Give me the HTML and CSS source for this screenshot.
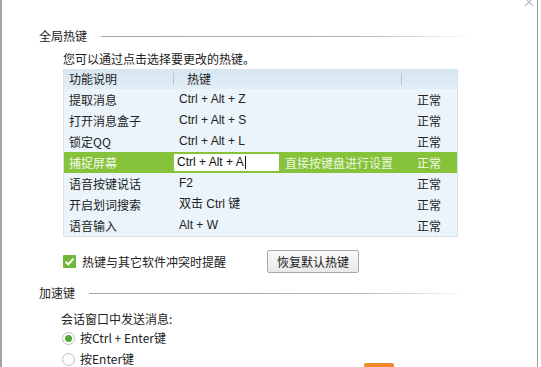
FILE: index.html
```html
<!DOCTYPE html>
<html lang="zh">
<head>
<meta charset="utf-8">
<link rel="stylesheet" href="styles.css">
</head>
<body>
<div class="frame">
  <svg class="close" width="10" height="8" viewBox="0 0 10 8"><path d="M1 -2 L9 6 M9 -2 L1 6" stroke="#bdbdbd" stroke-width="1.2" fill="none"/></svg>
  <div class="section-title"><span>全局热键</span><i class="rule"></i></div>
  <div class="hint">您可以通过点击选择要更改的热键。</div>
  <div class="table">
    <div class="row head">
      <div class="c1">功能说明</div>
      <div class="c2">热键</div>
      <div class="c3"></div>
    </div>
    <div class="row"><div class="c1">提取消息</div><div class="c2">Ctrl + Alt + Z</div><div class="c3">正常</div></div>
    <div class="row"><div class="c1">打开消息盒子</div><div class="c2">Ctrl + Alt + S</div><div class="c3">正常</div></div>
    <div class="row"><div class="c1">锁定QQ</div><div class="c2">Ctrl + Alt + L</div><div class="c3">正常</div></div>
    <div class="row sel">
      <div class="c1">捕捉屏幕</div>
      <div class="c2"><span class="input">Ctrl + Alt + A<i class="caret"></i></span><span class="tip">直接按键盘进行设置</span></div>
      <div class="c3">正常</div>
    </div>
    <div class="row"><div class="c1">语音按键说话</div><div class="c2">F2</div><div class="c3">正常</div></div>
    <div class="row"><div class="c1">开启划词搜索</div><div class="c2">双击 Ctrl 键</div><div class="c3">正常</div></div>
    <div class="row"><div class="c1">语音输入</div><div class="c2">Alt + W</div><div class="c3">正常</div></div>
  </div>
  <div class="opts">
    <label class="check"><span class="box"><svg width="13" height="13" viewBox="0 0 13 13"><rect x="0" y="0" width="13" height="13" rx="1" fill="#6fb83a"/><path d="M2.6 6.8 L5.3 9.3 L10.4 3.6" fill="none" stroke="#fff" stroke-width="2"/></svg></span>热键与其它软件冲突时提醒</label>
    <button class="btn">恢复默认热键</button>
  </div>
  <div class="section-title s2"><span>加速键</span><i class="rule"></i></div>
  <div class="hint2">会话窗口中发送消息:</div>
  <div class="radio on r1"><span class="dot"></span>按Ctrl + Enter键</div>
  <div class="radio"><span class="dot"></span>按Enter键</div>
  <div class="logo"></div>
</div>
</body>
</html>
```

FILE: styles.css
```css
html, body {
  margin: 0;
  padding: 0;
  background: #fff;
}
body {
  font-family: "Noto Sans CJK SC", "Microsoft YaHei", sans-serif;
  font-size: 12px;
  color: #222;
  width: 541px;
  height: 367px;
  overflow: hidden;
}
.frame {
  position: relative;
  width: 538px;
  height: 367px;
  border-left: 2px solid #a2a2a2;
  border-right: 1px solid #9a9a9a;
  padding-top: 28px;
  box-sizing: border-box;
}
.close {
  position: absolute;
  right: 3px;
  top: 0;
}
.section-title {
  display: flex;
  align-items: center;
  margin-left: 37px;
  height: 16px;
  line-height: 16px;
}
.section-title .rule {
  display: block;
  height: 1px;
  margin-left: 14px;
  width: 370px;
  background: linear-gradient(to right, #9aa8b2 0%, #aab8c2 70%, rgba(210,220,226,0) 100%);
}
.s2 .rule { margin-left: 14px; width: 380px; }
.hint {
  margin: 7px 0 0 61px;
  line-height: 16px;
  height: 16px;
}
.table {
  margin: 2px 0 0 61px;
  width: 393px;
  background: #eaf4fa;
  border: 1px solid #d3e2ec;
  border-top: 0;
}
.row {
  display: grid;
  grid-template-columns: 109px 228px 1fr;
  height: 21px;
  line-height: 21px;
  align-items: center;
}
.row .c1 { padding-left: 5px; }
.row .c2 { padding-left: 6px; display: flex; align-items: center; font-family: "Liberation Sans", "Noto Sans CJK SC", sans-serif; }
.row .c3 { padding-left: 16px; }
.head {
  height: 20px;
  line-height: 20px;
  background: linear-gradient(#d6e7f2, #e2eef6);
}
.head .c2 {
  padding-left: 13px;
  font-family: "Noto Sans CJK SC", sans-serif;
}
.head .c2, .head .c3 {
  border-left: 1px solid #b9c6cf;
  height: 12px;
  line-height: 12px;
}
.sel {
  background: #86c23a;
  color: #f4fbe9;
}
.sel .c2 { padding-left: 1px; }
.input {
  display: inline-flex;
  align-items: center;
  background: #fff;
  color: #111;
  width: 105px;
  height: 17px;
  padding-left: 3px;
  box-sizing: border-box;
}
.caret {
  display: inline-block;
  width: 1px;
  height: 13px;
  background: #111;
  margin-left: 1px;
}
.tip {
  margin-left: 6px;
  font-family: "Noto Sans CJK SC", sans-serif;
  color: #eef8e0;
}
.opts {
  display: flex;
  align-items: center;
  margin: 13px 0 0 61px;
}
.check {
  display: flex;
  align-items: center;
  width: 204px;
}
.box {
  display: inline-flex;
  margin-right: 6px;
}
.btn {
  font-family: "Noto Sans CJK SC", sans-serif;
  font-size: 12px;
  color: #222;
  width: 92px;
  height: 23px;
  border: 1px solid #a9a9a9;
  border-radius: 2px;
  background: linear-gradient(#fafafa, #e9e9e9);
  padding: 0;
  line-height: 20px;
}
.s2 { margin-top: 12px; }
.hint2 {
  margin: 10px 0 0 59px;
  line-height: 16px;
}
.radio {
  display: flex;
  align-items: center;
  margin: 5px 0 0 60px;
  line-height: 16px;
  font-family: "Noto Sans CJK SC", sans-serif;
}
.radio.r1 { margin-top: 3px; }
.dot {
  width: 11px;
  height: 11px;
  border: 1px solid #bdbdbd;
  border-radius: 50%;
  background: #fff;
  margin-right: 5px;
  position: relative;
}
.radio.on .dot::after {
  content: "";
  position: absolute;
  left: 2px;
  top: 2px;
  width: 7px;
  height: 7px;
  border-radius: 50%;
  background: #4ea83a;
}
.logo {
  position: absolute;
  left: 362px;
  top: 363px;
  width: 30px;
  height: 6px;
  background: #f08a2c;
  border-radius: 2px 2px 0 0;
}
```
